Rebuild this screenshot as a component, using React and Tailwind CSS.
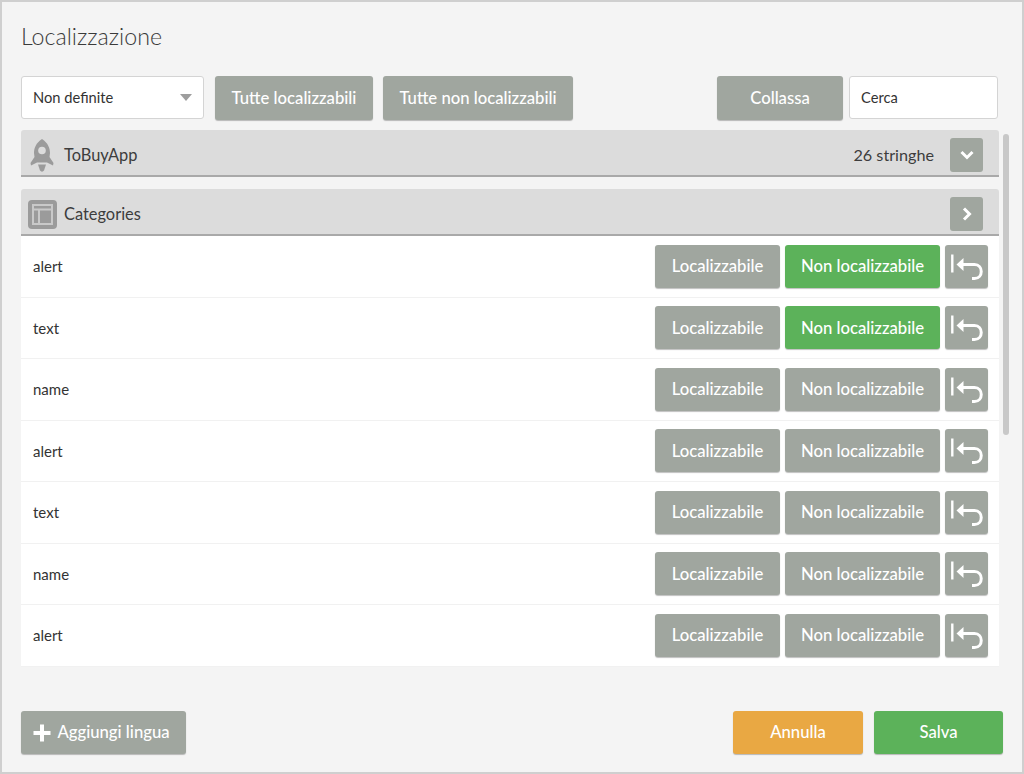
const F = "font-['Lato','Noto_Sans',sans-serif]";
const GRAY = "bg-[#a0a69f]";

function Btn({ className = "", children }) {
  return (
    <div className={`flex items-center justify-center rounded-[3px] pt-px text-white text-[16.7px] font-medium shadow-[0_1px_1px_rgba(0,0,0,0.25)] ${className}`}>
      {children}
    </div>
  );
}

function Rocket() {
  return (
    <svg width="24" height="33" viewBox="0 0 24 33" className="ml-[9px]">
      <path fill="#9b9b9b" d="M12 0 C6 4 4 9 4 14 L4.5 18 L0.5 24 L1 26.5 L7 23.5 L17 23.5 L23 26.5 L23.5 24 L19.5 18 L20 14 C20 9 18 4 12 0 Z" />
      <circle cx="12" cy="11.5" r="3.8" fill="#dcdcdc" />
      <path fill="#9b9b9b" d="M8 25.5 L16 25.5 L14 31.5 C13 33 11 33 10 31.5 Z" />
    </svg>
  );
}

function Panel() {
  return (
    <svg width="29" height="29" viewBox="0 0 29 29" className="ml-[7px]">
      <rect width="29" height="29" rx="4" fill="#9b9b9b" />
      <rect x="5" y="5" width="19" height="19" fill="none" stroke="#c9c9c9" strokeWidth="2" />
      <path d="M5 9.5 H24 M11 9.5 V24" fill="none" stroke="#c9c9c9" strokeWidth="2" />
    </svg>
  );
}

function UndoIcon() {
  return (
    <svg width="34" height="30" viewBox="0 0 34 30">
      <path d="M2.3 2.5 V20.5" stroke="#fff" strokeWidth="2.4" fill="none" />
      <path d="M12 12.5 H24.5 C33.5 12.5 33.5 26.5 24.5 26.5 H22" stroke="#fff" strokeWidth="3" fill="none" />
      <path d="M6.5 12.5 L13.5 6 V19 Z" fill="#fff" />
    </svg>
  );
}

function Chevron({ dir }) {
  return (
    <div className={`flex h-[34px] w-[33px] items-center justify-center rounded-[3px] ${GRAY}`}>
      <svg width="16" height="16" viewBox="0 0 16 16">
        <path d={dir === "down" ? "M2.5 5 L8 10.5 L13.5 5" : "M5 2.5 L10.5 8 L5 13.5"} fill="none" stroke="#fff" strokeWidth="3" />
      </svg>
    </div>
  );
}

function GroupHeader({ icon, label, right, dir }) {
  return (
    <div className="flex h-[47px] items-center rounded-t-[3px] border-b-2 border-[#a9a9a9] bg-[#dcdcdc] pt-[5px]">
      <div className="flex w-[36px] justify-start">{icon}</div>
      <span className="ml-[7px] text-[16.4px] text-[#3d3d3d]">{label}</span>
      <span className="ml-auto mr-[16px] text-[16.2px] text-[#3d3d3d]">{right}</span>
      <div className="mr-[16px]"><Chevron dir={dir} /></div>
    </div>
  );
}

function Row({ label, active }) {
  return (
    <div className="flex h-[61.5px] items-center border-b border-[#f1f1f1] bg-white pl-[12px]">
      <span className="text-[15px] text-[#333]">{label}</span>
      <div className="ml-auto mr-[11px] flex gap-[5px]">
        <Btn className={`h-[43px] w-[125px] ${GRAY}`}>Localizzabile</Btn>
        <Btn className={`h-[43px] w-[155px] ${active ? "bg-[#5cb25a]" : GRAY}`}>Non localizzabile</Btn>
        <Btn className={`h-[43px] w-[43px] ${GRAY}`}><UndoIcon /></Btn>
      </div>
    </div>
  );
}

const rows = [
  ["alert", true], ["text", true], ["name", false], ["alert", false],
  ["text", false], ["name", false], ["alert", false],
];

export default function App() {
  return (
    <div className={`flex h-[774px] w-[1024px] flex-col overflow-hidden border-2 border-[#cfcfcf] bg-[#f4f4f4] pl-[19px] ${F}`}>
      <h1 className="mt-[17px] mb-[2px] h-[34px] text-[23.2px] leading-[34px] font-light text-[#3a3a3a]">Localizzazione</h1>

      <div className="mt-[21px] flex h-[44px] items-start">
        <div className="flex h-[43px] w-[183px] items-center justify-between rounded-[3px] border border-[#d4d4d4] bg-white pl-[11px] pr-[11px] text-[14.7px] text-[#333]">
          <span>Non definite</span>
          <span className="h-0 w-0 border-x-[6px] border-t-[7px] border-x-transparent border-t-[#9e9e9e]" />
        </div>
        <Btn className={`ml-[11px] h-[44px] w-[158px] ${GRAY}`}>Tutte localizzabili</Btn>
        <Btn className={`ml-[10px] h-[44px] w-[190px] ${GRAY}`}>Tutte non localizzabili</Btn>
        <Btn className={`ml-[144px] h-[44px] w-[126px] ${GRAY}`}>Collassa</Btn>
        <div className="ml-[6px] flex h-[43px] w-[149px] items-center rounded-[3px] border border-[#d4d4d4] bg-white pl-[11px] text-[14.7px] text-[#333]">Cerca</div>
      </div>

      <div className="mt-[10px] flex">
        <div className="w-[978px]">
          <GroupHeader icon={<Rocket />} label="ToBuyApp" right="26 stringhe" dir="down" />
          <div className="mt-[12px]">
            <GroupHeader icon={<Panel />} label="Categories" dir="right" />
          </div>
          {rows.map(([label, active], i) => (
            <Row key={i} label={label} active={active} />
          ))}
        </div>
        <div className="ml-[4px] mt-[4px] h-[301px] w-[6px] rounded-full bg-[#c8c8c8]" />
      </div>

      <div className="mt-[44px] flex">
        <Btn className={`h-[43px] w-[165px] ${GRAY}`}>
          <svg width="18" height="18" viewBox="0 0 18 18" className="mr-[6px] -ml-[4px]">
            <path d="M7 0.5 H11 V7 H17.5 V11 H11 V17.5 H7 V11 H0.5 V7 H7 Z" fill="#fff" />
          </svg>
          Aggiungi lingua
        </Btn>
        <Btn className="ml-[547px] h-[43px] w-[130px] bg-[#e9a843]">Annulla</Btn>
        <Btn className="ml-[11px] h-[43px] w-[129px] bg-[#5cb25a]">Salva</Btn>
      </div>
    </div>
  );
}
